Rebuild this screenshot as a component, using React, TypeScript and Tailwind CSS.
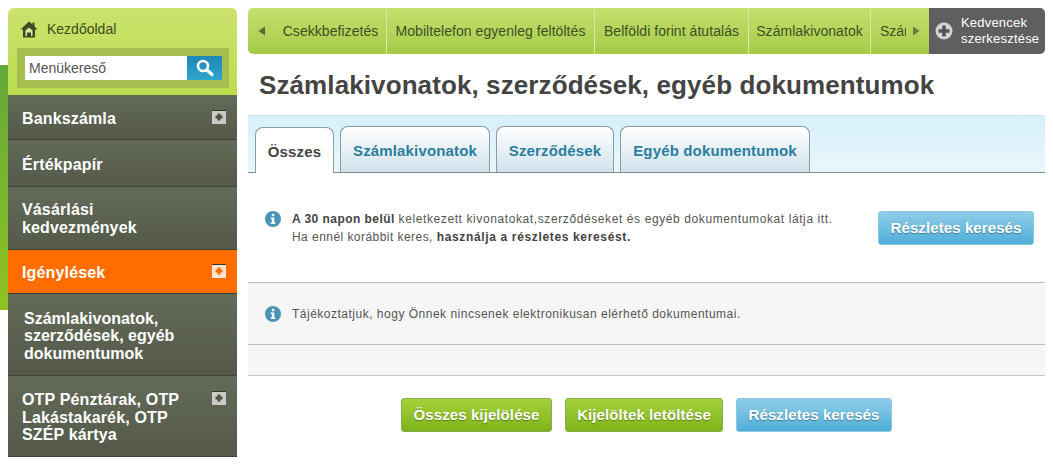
import React from "react";

const F = "font-['Liberation_Sans',Arial,sans-serif]";

function Plus({ orange }: { orange?: boolean }) {
  return (
    <svg width="14" height="14" viewBox="0 0 14 14" className="shrink-0 block">
      <rect x="0" y="0" width="14" height="14" fill={orange ? "#fbe3cd" : "#c9ccc4"} />
      <rect x="0" y="0" width="14" height="1" fill="#33372e" />
      <path d="M5.500 3.500h3v2h2v3h-2v2h-3v-2h-2v-3h2z" fill={orange ? "#f0720f" : "#4c5046"} />
    </svg>
  );
}

function Info() {
  return (
    <svg width="16" height="16" viewBox="0 0 16 16" className="shrink-0">
      <circle cx="8" cy="8" r="8" fill="#4a94b8" />
      <rect x="6.800" y="2.800" width="2.600" height="2.400" rx="1" fill="#fff" />
      <path d="M5.800 6.500h3.500v5h1v1.400h-4.500v-1.400h1v-3.600h-1z" fill="#fff" />
    </svg>
  );
}

function MenuItem({ children, h, plus, active, top, inset, up }: { children: React.ReactNode; h: string; plus?: boolean; active?: boolean; top?: boolean; inset?: boolean; up?: boolean }) {
  return (
    <div
      className={`${h} flex ${top ? "items-start pt-[15px]" : up ? "items-center pt-[1px]" : "items-center pt-[3px]"} justify-between ${inset ? "pl-[16px] tracking-[0px]" : "pl-[14px] tracking-[0.15px]"} pr-[11px] text-[16px] leading-[17.500px] font-bold text-white border-b ${
        active
          ? "bg-[#ff6c00] border-[#3d3d32]"
          : "bg-gradient-to-b from-[#646a58] to-[#545949] border-[#3f4339]"
      }`}
    >
      <div className="w-[180px]">{children}</div>
      {plus && <span className={top ? "" : "-mt-[4px]"}><Plus orange={active} /></span>}
    </div>
  );
}

function Btn({ children, w, blue }: { children: React.ReactNode; w: string; blue?: boolean }) {
  return (
    <div
      className={`${w} h-[34px] flex items-center justify-center rounded-[3px] border text-[15px] font-bold tracking-[0.1px] text-white [text-shadow:0_1px_1px_rgba(0,0,0,0.35)] ${
        blue
          ? "border-[#8cc8e2] bg-gradient-to-b from-[#8fcde9] to-[#4daed9]"
          : "border-[#86ad4f] bg-gradient-to-b from-[#a5d23a] to-[#7fb318]"
      }`}
    >
      {children}
    </div>
  );
}

function Tab({ children, w, active }: { children: React.ReactNode; w: string; active?: boolean }) {
  return (
    <div
      className={`${w} h-[46px] pt-[3px] flex items-center justify-center rounded-t-[8px] border border-b-0 border-[#8d9ba3] text-[15px] font-bold tracking-[0.15px] ${
        active
          ? "bg-white text-[#444] -mb-[1px]"
          : "bg-gradient-to-b from-white to-[#cfe3ec] text-[#2d7d9e]"
      }`}
    >
      {children}
    </div>
  );
}

function Fav({ children, w }: { children: React.ReactNode; w: string }) {
  return (
    <div className={`${w} shrink-0 h-full flex items-center justify-center border-r border-[#d8eaa0] text-[14px] tracking-[0.05px] text-[#3f4f24]`}>
      {children}
    </div>
  );
}

export default function App() {
  return (
    <div className={`${F} w-[1053px] h-[464px] overflow-hidden bg-white flex`}>
      <div className="w-[8px] h-[245px] mt-[65px] shrink-0 bg-gradient-to-b from-[#62a838] to-[#8fc31f]" />

      <aside className="w-[229px] shrink-0 mt-[8px]">
        <div className="h-[87px] rounded-t-[6px] bg-gradient-to-b from-[#cbe26e] to-[#bcdc4c] pl-[9px] pr-[8px] pt-[9px]">
          <div className="h-[24px] flex items-center pl-[3px] gap-[9px] text-[14px] text-[#3c4a16]">
            <svg width="18" height="17" viewBox="0 0 18 17">
              <path d="M9 0.500L0.500 8.500h2.500v8h12v-8h2.500L14.500 5.300V1.500h-2v2L9 0.500z" fill="#3d4a22" />
              <path d="M5.500 9.500L9 6.500l3.500 3v5.500h-1.500v-3.500h-4v3.500h-1.500z" fill="#dbe8a0" />
            </svg>
            Kezdőoldal
          </div>
          <div className="mt-[7px] h-[40px] bg-[#a6bd50] flex items-center pl-[8px] pr-[7px]">
            <div className="flex-1 h-[24px] bg-white flex items-center pl-[4px] text-[14px] text-[#555]">Menükereső</div>
            <div className="w-[35px] h-[24px] bg-gradient-to-b from-[#1f87b4] to-[#2ea5cf] flex items-center justify-center">
              <svg width="20" height="20" viewBox="0 0 20 20" fill="none" stroke="#fff">
                <circle cx="8" cy="8" r="5" strokeWidth="2.600" />
                <path d="M12 12L17 16.500" strokeWidth="3.400" strokeLinecap="round" />
              </svg>
            </div>
          </div>
        </div>
        <MenuItem h="h-[45px]" plus>Bankszámla</MenuItem>
        <MenuItem h="h-[47px]">Értékpapír</MenuItem>
        <MenuItem h="h-[63px]" up>Vásárlási kedvezmények</MenuItem>
        <MenuItem h="h-[44px]" plus active>Igénylések</MenuItem>
        <MenuItem h="h-[82px]" inset>Számlakivonatok, szerződések, egyéb dokumentumok</MenuItem>
        <MenuItem h="h-[81px]" plus top>OTP Pénztárak, OTP Lakástakarék, OTP SZÉP kártya</MenuItem>
      </aside>

      <main className="w-[797px] shrink-0 ml-[11px] mt-[8px]">
        <div className="h-[46px] flex">
          <div className="w-[681px] h-full flex rounded-l-[5px] overflow-hidden bg-gradient-to-b from-[#c6e06e] to-[#a4cb48]">
            <Fav w="w-[139px]">
              <svg width="8" height="10" viewBox="0 0 8 10" className="mr-[17px] ml-[2px]"><path d="M7 0.500v9L0.500 5z" fill="#5c6b36" /></svg>
              Csekkbefizetés
            </Fav>
            <Fav w="w-[208px]">Mobiltelefon egyenleg feltöltés</Fav>
            <Fav w="w-[154px]">Belföldi forint átutalás</Fav>
            <Fav w="w-[122px]">Számlakivonatok</Fav>
            <div className="flex-1 h-full flex items-center pl-[9px] text-[14px] text-[#3f4f24]">
              <span className="w-[26px] overflow-hidden whitespace-nowrap">Számlakivonatok</span>
              <svg width="8" height="10" viewBox="0 0 8 10" className="ml-[6px]"><path d="M1 0.500v9L7.500 5z" fill="#6b7a40" /></svg>
            </div>
          </div>
          <div className="flex-1 h-full bg-[#5f5f5f] rounded-r-[5px] flex items-center pl-[6px] gap-[8px] text-[13px] leading-[16px] tracking-[0.2px] text-white">
            <svg width="18" height="18" viewBox="0 0 18 18" className="shrink-0">
              <circle cx="9" cy="9" r="8.500" fill="#d4d4d4" />
              <path d="M7.200 3.500h3.600v3.700h3.700v3.600h-3.700v3.700h-3.600v-3.700h-3.700v-3.600h3.700z" fill="#555" />
            </svg>
            <div>Kedvencek<br />szerkesztése</div>
          </div>
        </div>

        <h1 className="h-[61px] pt-[1px] flex items-center pl-[11px] text-[26px] font-bold text-[#444] tracking-[0.1px]">
          Számlakivonatok, szerződések, egyéb dokumentumok
        </h1>

        <div className="h-[58px] bg-gradient-to-b from-[#d6f0fa] to-[#e9f7fc] border-t border-[#c9e4ef] border-b border-b-[#7f8c93] flex items-end pl-[7px] gap-[6px]">
          <Tab w="w-[79px]" active>Összes</Tab>
          <Tab w="w-[150px]">Számlakivonatok</Tab>
          <Tab w="w-[118px]">Szerződések</Tab>
          <Tab w="w-[190px]">Egyéb dokumentumok</Tab>
        </div>

        <div className="h-[110px] flex items-start border-b border-[#bdbdbd] pl-[17px] pr-[11px] pt-[38px]">
          <Info />
          <div className="ml-[11px] flex-1 text-[12px] leading-[18px] text-[#555] tracking-[0.45px] -mt-[1px]">
            <b className="text-[#444]">A 30 napon belül</b>{" "}
            <span className="tracking-[0.6px]">keletkezett kivonatokat,szerződéseket és egyéb dokumentumokat látja itt.</span>
            <br />
            Ha ennél korábbit keres, <b className="text-[#444] tracking-[0.65px]">használja a részletes keresést.</b>
          </div>
          <Btn w="w-[156px]" blue>Részletes keresés</Btn>
        </div>

        <div className="h-[62px] bg-[#f6f6f6] border-b border-[#bdbdbd] flex items-center pl-[17px] gap-[11px] text-[12px] tracking-[0.5px] text-[#555]">
          <Info />
          Tájékoztatjuk, hogy Önnek nincsenek elektronikusan elérhető dokumentumai.
        </div>

        <div className="h-[31px] bg-[#f6f6f6] border-b border-[#c4c4c4]" />

        <div className="mt-[22px] pl-[153px] flex gap-[13px]">
          <Btn w="w-[151px]">Összes kijelölése</Btn>
          <Btn w="w-[158px]">Kijelöltek letöltése</Btn>
          <Btn w="w-[156px]" blue>Részletes keresés</Btn>
        </div>
      </main>
    </div>
  );
}
